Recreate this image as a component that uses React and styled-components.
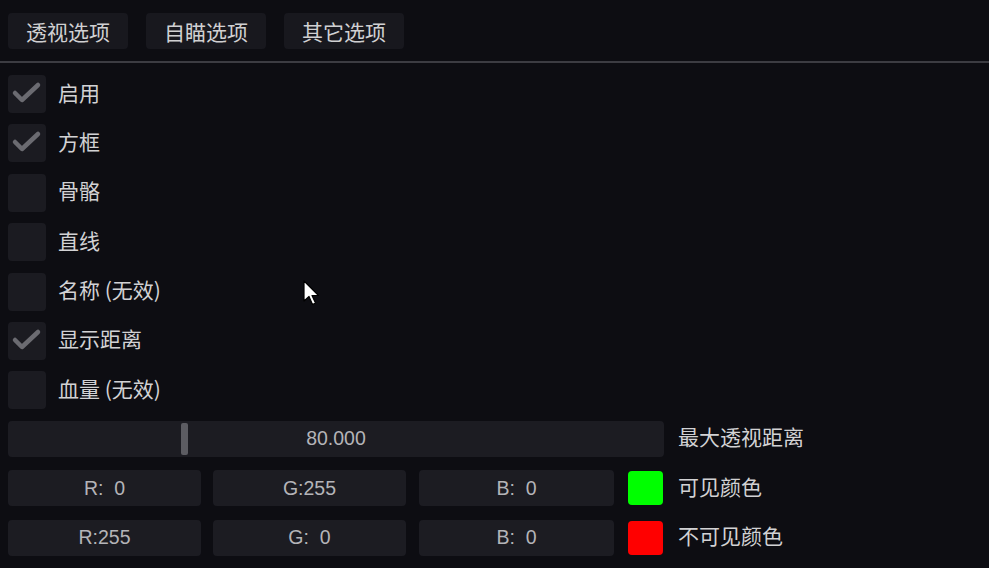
import React from 'react'
import styled, { createGlobalStyle } from 'styled-components'

const Global = createGlobalStyle`
html, body {
  margin: 0;
  background: #0d0d12;
}
body {
  font-family: "Noto Sans CJK SC", "Noto Sans", "Liberation Sans", sans-serif;
  color: #d4d4d6;
}
`

const Page = styled.div`
position: relative;
width: 989px;
height: 568px;
overflow: hidden;
box-sizing: border-box;
padding: 13px 8px 0;
display: flex;
flex-direction: column;
`

const Tabs = styled.div`
display: flex;
gap: 18px;
`

const Tab = styled.div`
width: 120px;
height: 36px;
border-radius: 4px;
background: #18181e;
display: flex;
align-items: center;
justify-content: center;
font-size: 21px;
line-height: 1;
color: #d0d0d2;
`

const Separator = styled.div`
height: 2px;
background: #3c3c42;
margin: 12px -8px 12px;
`

const List = styled.div`
display: flex;
flex-direction: column;
gap: 11.4px;
`

const Row = styled.div`
display: flex;
align-items: center;
gap: ${p => p.gap || 12}px;
height: ${p => p.h || 38}px;
`

const Box = styled.div`
width: 38px;
height: 38px;
border-radius: 4px;
background: #1b1b21;
display: flex;
align-items: center;
justify-content: center;
flex: none;
`

const Label = styled.span`
font-size: 21px;
line-height: 1;
color: #d2d2d4;
white-space: nowrap;
position: relative;
top: -2px;
`

const Frame = styled.div`
position: relative;
height: 36px;
border-radius: 4px;
background: #1c1c22;
display: flex;
align-items: center;
justify-content: center;
font-family: "Liberation Sans", "Noto Sans CJK SC", sans-serif;
font-size: 19.5px;
color: #b4b4b8;
white-space: pre;
`

const Slider = styled(Frame)`
width: 656px;
flex: none;
`

const Grab = styled.div`
position: absolute;
left: 173px;
top: 2px;
width: 7px;
height: 32px;
border-radius: 2px;
background: #5c5c62;
`

const FieldRow = styled.div`
display: flex;
align-items: center;
height: 36px;
margin-top: 2px;
`

const Field = styled(Frame)`
width: ${p => p.w}px;
flex: none;
margin-right: ${p => p.mr}px;
`

const Swatch = styled.div`
width: 35px;
height: 34px;
border-radius: 4px;
background: ${p => p.c};
margin-right: 15px;
flex: none;
`

const Cursor = styled.svg`
position: absolute;
left: 303px;
top: 280px;
`

const Check = () => (
  <svg width="38" height="38" viewBox="0 0 38 38">
    <path d="M7 18 L14 25 L30 10" fill="none" stroke="#6b6b71" strokeWidth="4.5" strokeLinecap="round" strokeLinejoin="round" />
  </svg>
)

const items = [
  ['启用', true],
  ['方框', true],
  ['骨骼', false],
  ['直线', false],
  ['名称 (无效)', false],
  ['显示距离', true],
  ['血量 (无效)', false],
]

const colors = [
  { vals: ['R:  0', 'G:255', 'B:  0'], c: '#00ff00', label: '可见颜色' },
  { vals: ['R:255', 'G:  0', 'B:  0'], c: '#ff0000', label: '不可见颜色' },
]

const App = () => {
  return (
    <Page>
      <Global />
      <Tabs>
        <Tab>透视选项</Tab>
        <Tab>自瞄选项</Tab>
        <Tab>其它选项</Tab>
      </Tabs>
      <Separator />
      <List>
        {items.map(([t, on]) => (
          <Row key={t}>
            <Box>{on && <Check />}</Box>
            <Label>{t}</Label>
          </Row>
        ))}
        <Row h={36} gap={14}>
          <Slider>
            <Grab />
            80.000
          </Slider>
          <Label>最大透视距离</Label>
        </Row>
        {colors.map(row => (
          <FieldRow key={row.label}>
            <Field w={193} mr={12}>{row.vals[0]}</Field>
            <Field w={193} mr={13}>{row.vals[1]}</Field>
            <Field w={195} mr={14}>{row.vals[2]}</Field>
            <Swatch c={row.c} />
            <Label>{row.label}</Label>
          </FieldRow>
        ))}
      </List>
      <Cursor width="18" height="28" viewBox="0 0 18 28">
        <path d="M1 1 L1 21 L6 16.5 L9.5 24.5 L12.5 23 L9 15.5 L15.5 15.5 Z" fill="#fff" stroke="#000" strokeWidth="1.2" strokeLinejoin="round" />
      </Cursor>
    </Page>
  )
}

export default App
